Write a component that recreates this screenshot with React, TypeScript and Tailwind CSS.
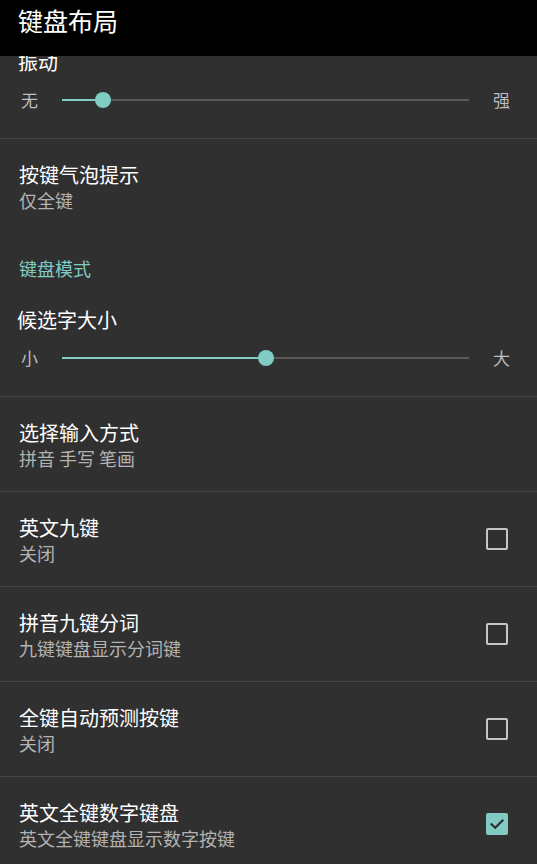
import React from "react";

const FONT = { fontFamily: '"Noto Sans CJK SC", "Noto Sans", sans-serif' };

function Slider({ left, right, pct }: { left: string; right: string; pct: number }) {
  return (
    <div className="mt-[6px] flex h-[40px] items-center pl-[21px] pr-[27px]">
      <div className="w-[41px] text-[17px] leading-[22px] text-[#bdbdbd]">{left}</div>
      <div className="relative h-[2px] flex-1 bg-[#5a5a5a]">
        <div className="absolute left-0 top-0 h-[2px] bg-[#80cbc4]" style={{ width: `${pct}%` }} />
        <div
          className="absolute top-1/2 h-[16px] w-[16px] -translate-x-1/2 -translate-y-1/2 rounded-full bg-[#80cbc4]"
          style={{ left: `${pct}%` }}
        />
      </div>
      <div className="ml-[24px] text-[17px] leading-[22px] text-[#bdbdbd]">{right}</div>
    </div>
  );
}

function Checkbox({ checked }: { checked?: boolean }) {
  if (checked) {
    return (
      <div className="flex h-[22px] w-[22px] items-center justify-center rounded-[2px] bg-[#80cbc4]">
        <svg width="16" height="16" viewBox="0 0 16 16" fill="none">
          <path d="M2.5 8.3 L6.2 11.8 L13.5 4.5" stroke="#303030" strokeWidth="2.2" strokeLinecap="square" />
        </svg>
      </div>
    );
  }
  return <div className="h-[22px] w-[22px] rounded-[2px] border-2 border-[#c6c6c6]" />;
}

function Item({ title, sub, check }: { title: string; sub: string; check?: "on" | "off" }) {
  return (
    <div className="flex items-center border-t border-[#444444] pb-[22px] pl-[19px] pr-[29px] pt-[22px]">
      <div className="flex-1">
        <div className="pt-[2px] text-[20px] leading-[24px] text-white">{title}</div>
        <div className="mt-[2px] text-[18px] leading-[22px] text-[#b3b3b3]">{sub}</div>
      </div>
      {check && <Checkbox checked={check === "on"} />}
    </div>
  );
}

export default function App() {
  return (
    <div style={FONT} className="flex h-[864px] w-[537px] flex-col overflow-hidden bg-[#303030]">
      <div className="h-[56px] shrink-0 bg-black px-[18px] pt-[5px]">
        <div className="text-[25px] leading-[30px] text-white">键盘布局</div>
      </div>
      <div className="flex-1 overflow-hidden">
        <div className="-mt-[8px]">
          <div className="pb-[18px]">
            <div className="pl-[18px] pt-[2px] text-[20px] leading-[24px] text-white">振动</div>
            <Slider left="无" right="强" pct={10} />
          </div>
          <div className="border-t border-[#444444] pl-[19px] pr-[29px] pt-[22px]">
            <div className="pt-[2px] text-[20px] leading-[24px] text-white">按键气泡提示</div>
            <div className="mt-[2px] text-[18px] leading-[22px] text-[#b3b3b3]">仅全键</div>
          </div>
          <div className="pl-[19px] pt-[46px] text-[18px] leading-[22px] text-[#80cbc4]">键盘模式</div>
          <div className="pb-[18px] pt-[27px]">
            <div className="pl-[17px] pt-[2px] text-[20px] leading-[24px] text-white">候选字大小</div>
            <Slider left="小" right="大" pct={50} />
          </div>
          <Item title="选择输入方式" sub="拼音 手写 笔画" />
          <Item title="英文九键" sub="关闭" check="off" />
          <Item title="拼音九键分词" sub="九键键盘显示分词键" check="off" />
          <Item title="全键自动预测按键" sub="关闭" check="off" />
          <Item title="英文全键数字键盘" sub="英文全键键盘显示数字按键" check="on" />
        </div>
      </div>
    </div>
  );
}
